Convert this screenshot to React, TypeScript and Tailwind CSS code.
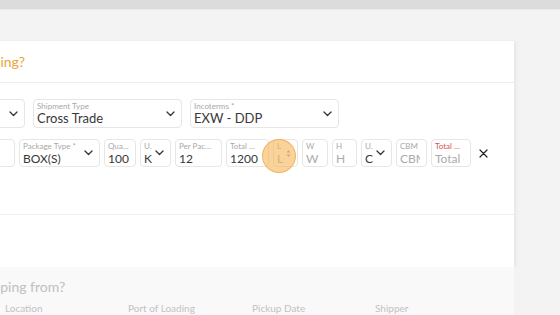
import React from 'react';

type FieldProps = {
  label: string;
  value: string;
  width: string;
  placeholder?: boolean;
  chevron?: boolean;
  spinner?: boolean;
  red?: boolean;
  big?: boolean;
};

const Chevron = () => (
  <svg width="9" height="6" viewBox="0 0 9 6" className="shrink-0 ml-[3px]">
    <path d="M1 1l3.5 3.5L8 1" fill="none" stroke="#333" strokeWidth="1.3" strokeLinecap="round" strokeLinejoin="round" />
  </svg>
);

const Spinner = () => (
  <svg width="5" height="9" viewBox="0 0 5 9" className="shrink-0">
    <path d="M0.5 3.5L2.5 1l2 2.5z" fill="#999" />
    <path d="M0.5 5.5L2.5 8l2-2.5z" fill="#999" />
  </svg>
);

const Field: React.FC<FieldProps> = ({ label, value, width, placeholder, chevron, spinner, red, big }) => (
  <div className={`${width} ${big ? 'h-[29px]' : 'h-[28px]'} shrink-0 flex items-center border border-[#e6e6e6] rounded-[4px] bg-white pl-[3px] pr-[6px] overflow-hidden`}>
    <div className="flex-1 min-w-0 flex flex-col overflow-hidden">
      <span className={`text-[8px] leading-[10px] truncate ${red ? 'text-[#d9534f]' : 'text-[#a8a8a8]'}`}>{label}</span>
      <span className={`${big ? 'text-[13px]' : 'text-[12px]'} leading-[15px] whitespace-nowrap overflow-hidden ${placeholder ? 'text-[#ababab]' : 'text-[#383838]'}`}>{value}</span>
    </div>
    {chevron && <Chevron />}
    {spinner && <Spinner />}
  </div>
);

export default function App() {
  return (
    <div className="relative w-[560px] h-[315px] overflow-hidden bg-[#f3f3f3]" style={{ fontFamily: 'Lato, "Open Sans", sans-serif' }}>
      <div className="h-[9px] bg-[#dcdcdc]" />
      <div className="h-px bg-[#ececec]" />
      <div className="pt-[31px]">
        <div className="ml-[-140px] w-[654px] bg-white shadow-[2px_0_3px_rgba(0,0,0,0.05)]">
          {/* header */}
          <div className="h-[42px] pl-[21px] pr-4 flex items-center border-b border-[#eeeeee]">
            <span className="text-[14px] text-[#eda43a]">What are you shipping?</span>
          </div>

          {/* body */}
          <div className="h-[132px] px-4 pt-[16px] border-b border-[#eeeeee]">
            <div className="flex gap-2">
              <Field big label="Shipping Mode *" value="Sea FCL" width="w-[149px]" chevron />
              <Field big label="Shipment Type" value="Cross Trade" width="w-[149px]" chevron />
              <Field big label="Incoterms *" value="EXW - DDP" width="w-[149px]" chevron />
            </div>
            <div className="flex gap-1 mt-[11px] items-center">
              <Field label="Description" value="Goods" width="w-[139px]" />
              <Field label="Package Type *" value="BOX(S)" width="w-[81px]" chevron />
              <Field label="Quantity" value="100" width="w-[32px]" />
              <Field label="Unit" value="KG" width="w-[31px]" chevron />
              <Field label="Per Package" value="12" width="w-[47px]" />
              <Field label="Total Weight" value="1200" width="w-[43px]" />
              <Field label="L" value="L" width="w-[25px]" placeholder spinner />
              <Field label="W" value="W" width="w-[26px]" placeholder />
              <Field label="H" value="H" width="w-[25px]" placeholder />
              <Field label="Unit" value="CM" width="w-[31px]" chevron />
              <Field label="CBM" value="CBM" width="w-[31px]" placeholder />
              <Field label="Total CBM" value="Total CBM" width="w-[40px]" placeholder red />
              <button aria-label="Remove" className="ml-[4px] w-[9px] h-[9px] flex items-center justify-center">
                <svg width="9" height="9" viewBox="0 0 9 9">
                  <path d="M1 1l7 7M8 1L1 8" stroke="#222" strokeWidth="1.2" strokeLinecap="round" />
                </svg>
              </button>
            </div>
          </div>

          <div className="h-[52px]" />
        </div>

        {/* next step */}
        <div className="ml-[-140px] w-[654px] h-[60px] bg-[#f9f9f9] pl-[21px] pr-4 pt-[10px]">
          <div className="text-[14px] leading-[20px] text-[#c0c0c0]">Where are you shipping from?</div>
          <div className="flex mt-[4px] pl-[1px] text-[10px] leading-[14px] text-[#c2c2c2]">
            <span className="w-[123px]">Country</span>
            <span className="w-[123px]">Location</span>
            <span className="w-[124px]">Port of Loading</span>
            <span className="w-[123px]">Pickup Date</span>
            <span>Shipper</span>
          </div>
        </div>
      </div>

      {/* click indicator */}
      <div className="absolute left-[262px] top-[139px] w-[34px] h-[34px] rounded-full bg-[#f6b658]/60 border border-[#f0a540]/70" />
    </div>
  );
}
